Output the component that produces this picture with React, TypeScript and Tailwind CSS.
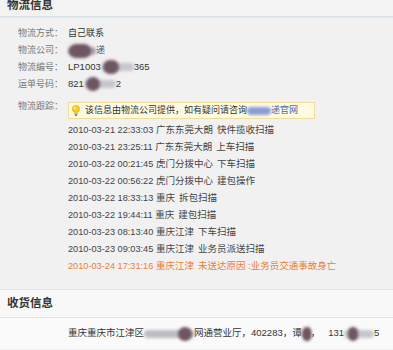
import React from "react";

const font = { fontFamily: '"Liberation Sans", "Noto Sans CJK SC", sans-serif' };

type Track = { time: string; place: string; status: string; warn?: boolean };

const tracks: Track[] = [
  { time: "2010-03-21 22:33:03", place: "广东东莞大朗", status: "快件揽收扫描" },
  { time: "2010-03-21 23:25:11", place: "广东东莞大朗", status: "上车扫描" },
  { time: "2010-03-22 00:21:45", place: "虎门分拨中心", status: "下车扫描" },
  { time: "2010-03-22 00:56:22", place: "虎门分拨中心", status: "建包操作" },
  { time: "2010-03-22 18:33:13", place: "重庆", status: "拆包扫描" },
  { time: "2010-03-22 19:44:11", place: "重庆", status: "建包扫描" },
  { time: "2010-03-23 08:13:40", place: "重庆江津", status: "下车扫描" },
  { time: "2010-03-23 09:03:45", place: "重庆江津", status: "业务员派送扫描" },
  { time: "2010-03-24 17:31:16", place: "重庆江津", status: "未送达原因 :业务员交通事故身亡", warn: true },
];

// blurred smudge over hidden text
function Smudge({ w, dark = 0, at = 1, color }: { w: number; dark?: number; at?: number; color?: string }) {
  return (
    <span className="relative inline-block h-[10px] align-middle" style={{ width: w }}>
      <span
        className="absolute inset-y-[1px] left-0 right-0 rounded-full blur-[1.5px]"
        style={{ background: color || "#b9b9c2" }}
      />
      {dark > 0 && (
        <span
          className="absolute top-[-2px] bottom-[-2px] rounded-full bg-[#6e5562] blur-[1.5px]"
          style={{ width: dark, left: at }}
        />
      )}
    </span>
  );
}

function Bulb() {
  return (
    <svg width="8" height="12" viewBox="0 0 8 12">
      <circle cx="4" cy="4" r="3.6" fill="#f7cf1c" stroke="#e0a800" strokeWidth="0.6" />
      <rect x="2.3" y="7.2" width="3.4" height="1.6" fill="#f2c418" />
      <rect x="2.4" y="8.8" width="3.2" height="1.2" fill="#9a9a9a" />
      <rect x="2.9" y="10" width="2.2" height="1" rx="0.5" fill="#7a7a7a" />
      <circle cx="2.8" cy="2.9" r="1" fill="#fff6b8" />
    </svg>
  );
}

function Row({ label, children }: { label: string; children: React.ReactNode }) {
  return (
    <div className="flex h-[17px] items-center pl-[18px]">
      <div className="w-[50px] shrink-0 whitespace-nowrap text-[9px] text-[#777]">{label}</div>
      <div className="flex items-center whitespace-nowrap text-[9px] text-[#333]">{children}</div>
    </div>
  );
}

export default function App() {
  return (
    <div className="h-[350px] w-[393px] overflow-hidden bg-[#f1f1f1]" style={font}>
      <div className="h-[17px] border-b border-[#d6dee6] bg-[#f3f3f3] pl-[7px] text-[11.5px] font-bold leading-[10px] text-[#333]">
        物流信息
      </div>
      <div className="h-px bg-[#e6ebf0]" />

      <div className="pt-[7px]">
        <Row label="物流方式：">自己联系</Row>
        <Row label="物流公司：">
          <Smudge w={28} dark={22} color="#a99fa8" />
          <span className="text-[#555]">递</span>
        </Row>
        <Row label="物流编号：">
          <span className="text-[9.5px]">LP1003</span>
          <span className="ml-[1px]">
            <Smudge w={32} dark={16} color="#c6c6ce" />
          </span>
          <span className="text-[9.5px]">365</span>
        </Row>
        <Row label="运单号码：">
          <span className="text-[9.5px]">821</span>
          <span className="ml-[1px]">
            <Smudge w={31} dark={14} color="#c6c6ce" />
          </span>
          <span className="text-[9.5px]">2</span>
        </Row>

        <div className="mt-[9px] flex items-start pl-[18px]">
          <div className="mt-[-2px] w-[50px] shrink-0 whitespace-nowrap text-[9px] leading-[12px] text-[#777]">物流跟踪：</div>
          <div className="flex h-[17px] w-[247px] items-center whitespace-nowrap border border-[#f1dc98] bg-[#fffbe3] pl-[3px] text-[9px] text-[#333]">
            <Bulb />
            <span className="ml-[5px]">该信息由物流公司提供，如有疑问请咨询</span>
            <Smudge w={24} color="#8c9cd6" />
            <span className="text-[#4a63b0]">递官网</span>
          </div>
        </div>

        <div className="mt-[3px] pl-[68px]">
          {tracks.map((t) => (
            <div
              key={t.time}
              className={`flex h-[17px] items-center whitespace-pre text-[9.5px] ${t.warn ? "text-[#ee7d33]" : "text-[#444]"}`}
            >
              <span className="text-[9.2px]">{t.time} </span>
              <span>{t.place}</span>
              <span className="ml-[4px]">{t.status}</span>
            </div>
          ))}
        </div>
      </div>

      <div className="mt-[14px] border-t border-[#dde3e9] bg-[#f8f8f8]">
        <div className="flex h-[28px] items-center border-b border-[#dfe5ea] pl-[7px] text-[11.5px] font-bold text-[#333]">
          收货信息
        </div>
        <div className="flex h-[31px] items-center whitespace-nowrap bg-[#fafafa] pl-[68px] text-[9.5px] text-[#333]">
          <span>重庆重庆市江津区</span>
          <Smudge w={50} dark={14} at={34} color="#bcbcc3" />
          <span>网通营业厅，402283，谭</span>
          <Smudge w={9} dark={8} color="#8a6c7c" />
          <span>，</span>
          <span className="ml-[8px]">131</span>
          <Smudge w={30} dark={10} at={4} color="#c6c6ce" />
          <span>5</span>
        </div>
      </div>
    </div>
  );
}
